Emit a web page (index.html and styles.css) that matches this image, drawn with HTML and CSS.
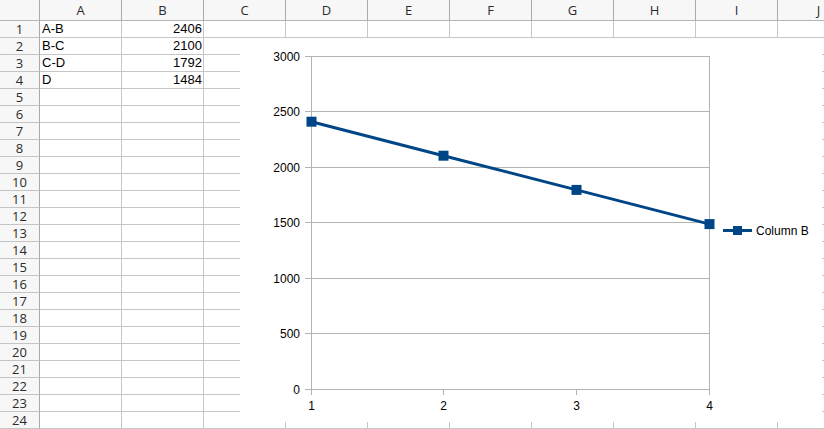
FILE: index.html
```html
<!DOCTYPE html>
<html lang="en">
<head>
    <meta charset="UTF-8">
    <title>Sheet1 - Calc</title>
    <link rel="stylesheet" href="styles.css">
</head>
<body>
<div class="sheet">
    <!-- column headers -->
    <div class="corner"></div>
    <div class="ch">A</div><div class="ch">B</div><div class="ch">C</div><div class="ch">D</div><div class="ch">E</div>
    <div class="ch">F</div><div class="ch">G</div><div class="ch">H</div><div class="ch">I</div><div class="ch">J</div>

    <!-- data rows -->
    <div class="rh">1</div><div class="c">A-B</div><div class="c num">2406</div><div class="c"></div><div class="c"></div><div class="c"></div><div class="c"></div><div class="c"></div><div class="c"></div><div class="c"></div><div class="c"></div>
    <div class="rh">2</div><div class="c">B-C</div><div class="c num">2100</div><div class="c"></div><div class="c"></div><div class="c"></div><div class="c"></div><div class="c"></div><div class="c"></div><div class="c"></div><div class="c"></div>
    <div class="rh">3</div><div class="c">C-D</div><div class="c num">1792</div><div class="c"></div><div class="c"></div><div class="c"></div><div class="c"></div><div class="c"></div><div class="c"></div><div class="c"></div><div class="c"></div>
    <div class="rh">4</div><div class="c">D</div><div class="c num">1484</div><div class="c"></div><div class="c"></div><div class="c"></div><div class="c"></div><div class="c"></div><div class="c"></div><div class="c"></div><div class="c"></div>
    <div class="rh">5</div><div class="c"></div><div class="c"></div><div class="c"></div><div class="c"></div><div class="c"></div><div class="c"></div><div class="c"></div><div class="c"></div><div class="c"></div><div class="c"></div>
    <div class="rh">6</div><div class="c"></div><div class="c"></div><div class="c"></div><div class="c"></div><div class="c"></div><div class="c"></div><div class="c"></div><div class="c"></div><div class="c"></div><div class="c"></div>
    <div class="rh">7</div><div class="c"></div><div class="c"></div><div class="c"></div><div class="c"></div><div class="c"></div><div class="c"></div><div class="c"></div><div class="c"></div><div class="c"></div><div class="c"></div>
    <div class="rh">8</div><div class="c"></div><div class="c"></div><div class="c"></div><div class="c"></div><div class="c"></div><div class="c"></div><div class="c"></div><div class="c"></div><div class="c"></div><div class="c"></div>
    <div class="rh">9</div><div class="c"></div><div class="c"></div><div class="c"></div><div class="c"></div><div class="c"></div><div class="c"></div><div class="c"></div><div class="c"></div><div class="c"></div><div class="c"></div>
    <div class="rh">10</div><div class="c"></div><div class="c"></div><div class="c"></div><div class="c"></div><div class="c"></div><div class="c"></div><div class="c"></div><div class="c"></div><div class="c"></div><div class="c"></div>
    <div class="rh">11</div><div class="c"></div><div class="c"></div><div class="c"></div><div class="c"></div><div class="c"></div><div class="c"></div><div class="c"></div><div class="c"></div><div class="c"></div><div class="c"></div>
    <div class="rh">12</div><div class="c"></div><div class="c"></div><div class="c"></div><div class="c"></div><div class="c"></div><div class="c"></div><div class="c"></div><div class="c"></div><div class="c"></div><div class="c"></div>
    <div class="rh">13</div><div class="c"></div><div class="c"></div><div class="c"></div><div class="c"></div><div class="c"></div><div class="c"></div><div class="c"></div><div class="c"></div><div class="c"></div><div class="c"></div>
    <div class="rh">14</div><div class="c"></div><div class="c"></div><div class="c"></div><div class="c"></div><div class="c"></div><div class="c"></div><div class="c"></div><div class="c"></div><div class="c"></div><div class="c"></div>
    <div class="rh">15</div><div class="c"></div><div class="c"></div><div class="c"></div><div class="c"></div><div class="c"></div><div class="c"></div><div class="c"></div><div class="c"></div><div class="c"></div><div class="c"></div>
    <div class="rh">16</div><div class="c"></div><div class="c"></div><div class="c"></div><div class="c"></div><div class="c"></div><div class="c"></div><div class="c"></div><div class="c"></div><div class="c"></div><div class="c"></div>
    <div class="rh">17</div><div class="c"></div><div class="c"></div><div class="c"></div><div class="c"></div><div class="c"></div><div class="c"></div><div class="c"></div><div class="c"></div><div class="c"></div><div class="c"></div>
    <div class="rh">18</div><div class="c"></div><div class="c"></div><div class="c"></div><div class="c"></div><div class="c"></div><div class="c"></div><div class="c"></div><div class="c"></div><div class="c"></div><div class="c"></div>
    <div class="rh">19</div><div class="c"></div><div class="c"></div><div class="c"></div><div class="c"></div><div class="c"></div><div class="c"></div><div class="c"></div><div class="c"></div><div class="c"></div><div class="c"></div>
    <div class="rh">20</div><div class="c"></div><div class="c"></div><div class="c"></div><div class="c"></div><div class="c"></div><div class="c"></div><div class="c"></div><div class="c"></div><div class="c"></div><div class="c"></div>
    <div class="rh">21</div><div class="c"></div><div class="c"></div><div class="c"></div><div class="c"></div><div class="c"></div><div class="c"></div><div class="c"></div><div class="c"></div><div class="c"></div><div class="c"></div>
    <div class="rh">22</div><div class="c"></div><div class="c"></div><div class="c"></div><div class="c"></div><div class="c"></div><div class="c"></div><div class="c"></div><div class="c"></div><div class="c"></div><div class="c"></div>
    <div class="rh">23</div><div class="c"></div><div class="c"></div><div class="c"></div><div class="c"></div><div class="c"></div><div class="c"></div><div class="c"></div><div class="c"></div><div class="c"></div><div class="c"></div>
    <div class="rh">24</div><div class="c"></div><div class="c"></div><div class="c"></div><div class="c"></div><div class="c"></div><div class="c"></div><div class="c"></div><div class="c"></div><div class="c"></div><div class="c"></div>

    <!-- line chart of column B, floats over the cells -->
    <div class="chart">
        <svg width="582" height="384" viewBox="240 38 582 384">
            <g class="grid">
                <line x1="311" y1="56.5" x2="710" y2="56.5"/>
                <line x1="311" y1="111.5" x2="710" y2="111.5"/>
                <line x1="311" y1="167.5" x2="710" y2="167.5"/>
                <line x1="311" y1="222.5" x2="710" y2="222.5"/>
                <line x1="311" y1="278.5" x2="710" y2="278.5"/>
                <line x1="311" y1="333.5" x2="710" y2="333.5"/>
                <line x1="709.5" y1="56" x2="709.5" y2="389"/>
            </g>
            <g class="axis">
                <line x1="311.5" y1="56" x2="311.5" y2="390"/>
                <line x1="305" y1="389.5" x2="710" y2="389.5"/>
                <line x1="305" y1="56.5" x2="311" y2="56.5"/>
                <line x1="305" y1="111.5" x2="311" y2="111.5"/>
                <line x1="305" y1="167.5" x2="311" y2="167.5"/>
                <line x1="305" y1="222.5" x2="311" y2="222.5"/>
                <line x1="305" y1="278.5" x2="311" y2="278.5"/>
                <line x1="305" y1="333.5" x2="311" y2="333.5"/>
                <line x1="311.5" y1="389" x2="311.5" y2="395"/>
                <line x1="443.5" y1="389" x2="443.5" y2="395"/>
                <line x1="576.5" y1="389" x2="576.5" y2="395"/>
                <line x1="709.5" y1="389" x2="709.5" y2="395"/>
            </g>
            <g class="ylabels">
                <text x="300" y="60.5">3000</text>
                <text x="300" y="115.5">2500</text>
                <text x="300" y="171.5">2000</text>
                <text x="300" y="226.5">1500</text>
                <text x="300" y="282.5">1000</text>
                <text x="300" y="337.5">500</text>
                <text x="300" y="393.5">0</text>
            </g>
            <g class="xlabels">
                <text x="311.5" y="410">1</text>
                <text x="443.5" y="410">2</text>
                <text x="576.5" y="410">3</text>
                <text x="709.5" y="410">4</text>
            </g>
            <polyline class="series" points="311.5,121.7 443.5,155.7 576.5,189.9 709.5,224.1"/>
            <g class="marker">
                <rect x="306.5" y="116.7" width="10" height="10"/>
                <rect x="438.5" y="150.7" width="10" height="10"/>
                <rect x="571.5" y="184.9" width="10" height="10"/>
                <rect x="704.5" y="219.1" width="10" height="10"/>
            </g>
            <!-- legend -->
            <line class="series" x1="723" y1="230.5" x2="752" y2="230.5"/>
            <rect class="marker" x="733" y="226" width="9" height="9"/>
            <text class="legend" x="756" y="235">Column B</text>
        </svg>
    </div>
</div>
</body>
</html>
```

FILE: styles.css
```css
body {
    margin: 0;
    background: #ffffff;
    overflow: hidden;
}

.sheet {
    position: relative;
    display: grid;
    grid-template-columns: 40px repeat(10, 82px);
    grid-template-rows: 21px repeat(24, 17px);
    width: 824px;
    height: 429px;
    overflow: hidden;
    font-family: "Liberation Sans", Arial, sans-serif;
    font-size: 13px;
}

.sheet > div {
    box-sizing: border-box;
}

.corner,
.ch,
.rh {
    background: #f7f7f7;
    color: #2b2b2b;
    font-family: "Open Sans", "DejaVu Sans", sans-serif;
    border-right: 1px solid #a9a9a9;
    border-bottom: 1px solid #b5b5b5;
}

.ch {
    font-size: 13px;
    line-height: 20px;
    text-align: center;
}

.rh {
    font-size: 13px;
    line-height: 16px;
    text-align: center;
    border-bottom-color: #c4c4c4;
}

.c {
    border-right: 1px solid #c6c6c6;
    border-bottom: 1px solid #c6c6c6;
    line-height: 16px;
    padding: 0 2px;
    color: #000000;
    white-space: nowrap;
}

.num {
    text-align: right;
    padding-right: 1px;
}

.chart {
    position: absolute;
    left: 240px;
    top: 38px;
    width: 582px;
    height: 384px;
    background: #ffffff;
}

.chart svg {
    display: block;
}

.grid line,
.axis line {
    stroke: #b3b3b3;
    stroke-width: 1;
}

.chart text {
    font-family: "Liberation Sans", Arial, sans-serif;
    font-size: 12px;
    fill: #000000;
}

.ylabels text {
    text-anchor: end;
}

.xlabels text {
    text-anchor: middle;
}

.series {
    fill: none;
    stroke: #004586;
    stroke-width: 3;
}

.marker,
.marker rect {
    fill: #004586;
}
```
